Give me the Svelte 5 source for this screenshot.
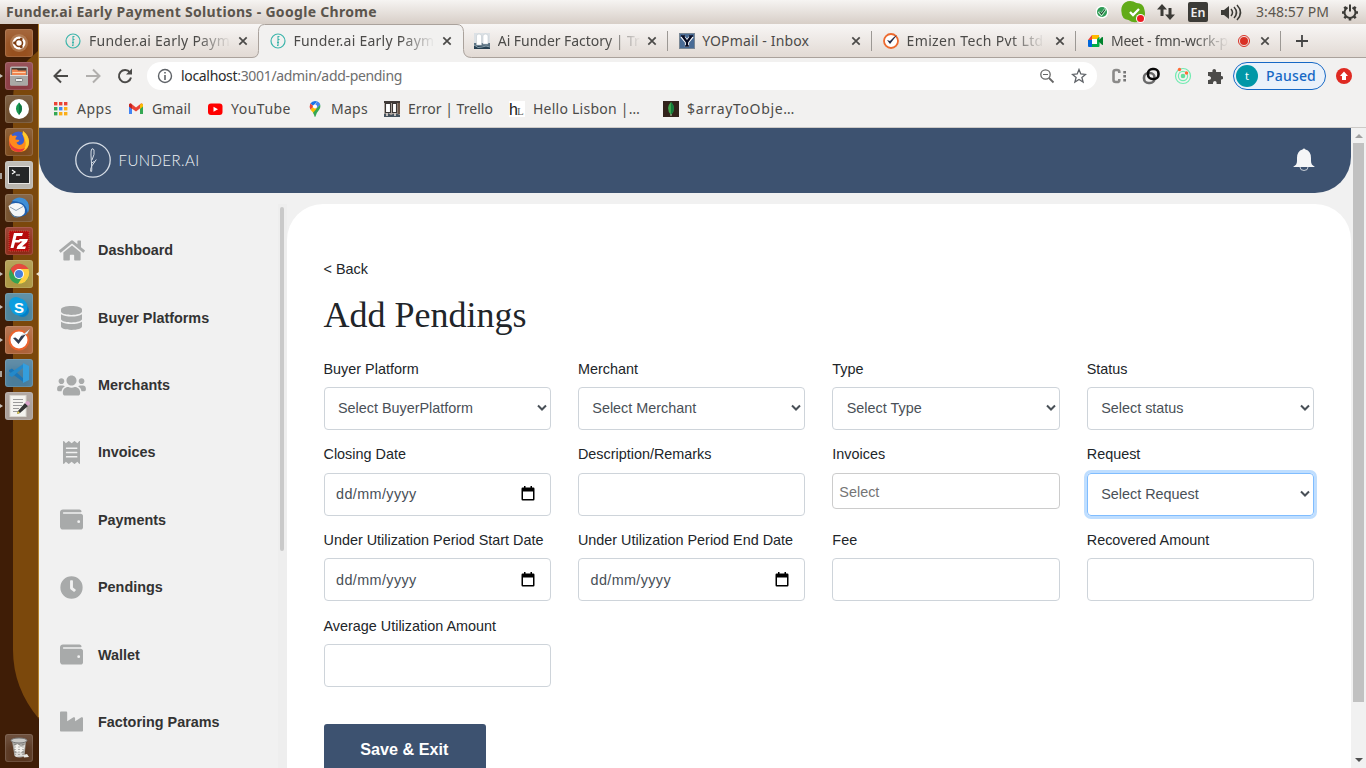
<script>
  const tabs = [
    { icon: 'funder', text: 'Funder.ai Early Paym', w: 141, clip: 142, fade: true },
    { icon: 'funder', text: 'Funder.ai Early Paym', w: 141, clip: 142, fade: true },
    { icon: 'factory', text: 'Ai Funder Factory | Tr', w: 142, clip: 143, fade: true, sep: true },
    { icon: 'yop', text: 'YOPmail - Inbox', w: 107, clip: 142, sep: true },
    { icon: 'emizen', text: 'Emizen Tech Pvt Ltd', w: 137, clip: 138, fade: true, sep: true },
    { icon: 'meet', text: 'Meet - fmn-wcrk-p', w: 117, clip: 118, fade: true, sep: true, rec: true }
  ];

  const bookmarks = [
    { icon: 'apps', text: 'Apps', w: 35, box: 75 },
    { icon: 'gmail', text: 'Gmail', w: 39, box: 79 },
    { icon: 'youtube', text: 'YouTube', w: 60, box: 100 },
    { icon: 'maps', text: 'Maps', w: 37, box: 77 },
    { icon: 'trello', text: 'Error | Trello', w: 85, box: 125 },
    { icon: 'lisbon', text: 'Hello Lisbon |…', w: 107, box: 154 },
    { icon: 'leaf', text: '$arrayToObje…', w: 108, box: 140 }
  ];

  const menu = [
    ['home', 'Dashboard'],
    ['database', 'Buyer Platforms'],
    ['users', 'Merchants'],
    ['receipt', 'Invoices'],
    ['wallet', 'Payments'],
    ['clock', 'Pendings'],
    ['wallet', 'Wallet'],
    ['industry', 'Factoring Params']
  ];

  const fields = [
    { label: 'Buyer Platform', kind: 'select', text: 'Select BuyerPlatform' },
    { label: 'Merchant', kind: 'select', text: 'Select Merchant' },
    { label: 'Type', kind: 'select', text: 'Select Type' },
    { label: 'Status', kind: 'select', text: 'Select status' },
    { label: 'Closing Date', kind: 'date' },
    { label: 'Description/Remarks', kind: 'text' },
    { label: 'Invoices', kind: 'multi', text: 'Select' },
    { label: 'Request', kind: 'select', text: 'Select Request', focus: true },
    { label: 'Under Utilization Period Start Date', kind: 'date' },
    { label: 'Under Utilization Period End Date', kind: 'date' },
    { label: 'Fee', kind: 'text' },
    { label: 'Recovered Amount', kind: 'text' },
    { label: 'Average Utilization Amount', kind: 'text' }
  ];

  const dock = [
    { app: 'ubuntu', bg: '#97501f' },
    { app: 'files', bg: '#8a3a42', mark: 'run' },
    { app: 'mongo', bg: '#6b4a2a' },
    { app: 'firefox', bg: '#7d4a1c' },
    { app: 'terminal', bg: '#b9b5ae', mark: 'block' },
    { app: 'thunderbird', bg: '#75502c' },
    { app: 'filezilla', bg: '#8e2a18' },
    { app: 'chrome', bg: '#ac9642', mark: 'run', active: true },
    { app: 'skype', bg: '#4b8299', mark: 'run' },
    { app: 'todo', bg: '#ad6238', mark: 'run' },
    { app: 'code', bg: '#4a7d9b', mark: 'block' },
    { app: 'editor', bg: '#a79d97', mark: 'run' }
  ];

  // Spreads the letters so that a label occupies its intended width.
  function fit(node, width) {
    const natural = node.getBoundingClientRect().width;
    node.style.letterSpacing = (width - natural) / node.textContent.length + 'px';
  }
</script>

{#snippet favicon(name)}
  <svg class="fav" width="16" height="16" viewBox="0 0 16 16">
    {#if name === 'funder'}
      <circle cx="8" cy="8" r="7" fill="none" stroke="#3db5ab" stroke-width="1.200" />
      <path d="M8 3v10M8 3.500h1.500M8 6.500h1.500M7 9.500h2M7 12.500h1.500" stroke="#3db5ab" fill="none" stroke-width="1.100" />
    {:else if name === 'factory'}
      <rect width="16" height="16" fill="#dce1e5" /><path d="M0 10h16v6H0z" fill="#5b7282" /><path d="M0 13h16v3H0z" fill="#263f51" />
      <path d="M2.500 3q0-2 2.500-2t2.500 2v9h-5zM9 3q0-2 2.500-2T14 3v8H9z" fill="#fff" stroke="#b9c2c9" stroke-width=".5" /><path d="M0 12q4 4 8 2t8 0" stroke="#8aa0ad" fill="none" />
    {:else if name === 'yop'}
      <rect x=".5" y=".5" width="15" height="15" fill="#496b95" stroke="#7a8794" />
      <path d="M3 3l5 6M13 3L8 9v5" stroke="#fff" stroke-width="4.200" fill="none" /><path d="M3.500 3L8 9l4.500-6M8 9v4" stroke="#050b24" stroke-width="2.300" fill="none" /><path d="M2 3h4M10 3h4M6 13h4" stroke="#050b24" stroke-width="1.300" />
    {:else if name === 'emizen'}
      <circle cx="8" cy="8" r="7" fill="#fff" stroke="#ed6a2f" stroke-width="1.800" /><path d="M4 7l3 4 7-9-3 2-4 4z" fill="#222b48" />
    {:else if name === 'meet'}
      <path d="M1 7l4-5v5z" fill="#ea4335" /><path d="M5 2h7v5H5z" fill="#ffba00" /><path d="M1 7h4v7H2q-1 0-1-1z" fill="#0066da" /><path d="M5 10h4v4H5z" fill="#00ac47" /><path d="M9 7l3-3h.5v9q0 1-1 1H5v-3h4z" fill="#00ac47" /><path d="M11 8l4-4q1-.4 1 .5v7q0 1-1 .3z" fill="#00832d" /><path d="M5 6h5v5H5z" fill="#fff" />
    {:else if name === 'apps'}
      {#each ['#ea4335', '#ea4335', '#ea4335', '#34a853', '#4285f4', '#fbae17', '#34a853', '#fbae17', '#fbae17'] as c, i}
        <rect x={1 + (i % 3) * 5} y={1 + Math.floor(i / 3) * 5} width="3.400" height="3.400" fill={c} />
      {/each}
    {:else if name === 'gmail'}
      <path d="M1 4v9h3V7z" fill="#4285f4" /><path d="M15 4v9h-3V7z" fill="#34a853" /><path d="M1 4q0-2 2-1.500L8 6.500l5-4q2-.5 2 1.500v1L8 10.500 1 5.500z" fill="#ea4335" /><path d="M12 4l1-1.500q2-.5 2 1.500v1.500L12 8z" fill="#fbbc04" /><path d="M1 4q0-2 2-1.500L4 4v4L1 5.500z" fill="#c5221f" />
    {:else if name === 'youtube'}
      <rect x="1" y="2.500" width="14.500" height="11.500" rx="3" fill="#f00" /><path d="M6.500 5.800v5l4.500-2.500z" fill="#fff" />
    {:else if name === 'maps'}
      <path d="M3.300 2.500Q5 0 8 0q1.200 0 2.200.5L6.300 5z" fill="#1a73e8" /><path d="M10.200.5Q12.500 1.300 13.200 3.700L8.500 9 6.700 6.800z" fill="#4285f4" /><path d="M3.300 2.500L6.800 5.400 3.500 8.800Q2 5.500 3.300 2.500z" fill="#ea4335" /><path d="M3.500 8.800L11 1q2.500 3 1.200 6L6.800 12.500Q5 10.500 3.500 8.800z" fill="#fbbc04" /><path d="M10.200.5Q12.500 1.300 13.200 3.700L9.500 8 8.500 4z" fill="#4285f4" /><path d="M13.200 3.700q.6 2.600-.9 4.900Q9 12.500 8.500 15.500q-.5.800-1 0-.2-1.500-1.500-3.800z" fill="#34a853" /><circle cx="8" cy="5.500" r="2.100" fill="#fff" />
    {:else if name === 'trello'}
      <rect width="16" height="16" fill="#b4aaa3" /><path d="M0 0h16v2H0z" fill="#3f3936" /><path d="M1.500 2.500h5v9h-5zM8.500 2.500h4v9h-4z" fill="#fff" stroke="#3b3735" stroke-width="1.100" /><path d="M13.500 2H16v11h-2.500z" fill="#6b5648" /><path d="M0 13l4-1 3 2 4-2 5 2v2H0z" fill="#44525d" /><path d="M3 12v3M11 12v3" stroke="#efe4dc" stroke-width="1.500" />
    {:else if name === 'lisbon'}
      <rect width="16" height="16" fill="#fff" /><text x="0" y="13.500" class="lis-h">h</text><text x="8" y="14" class="lis-l">L</text>
    {:else if name === 'leaf'}
      <rect width="16" height="16" fill="#32231b" /><path d="M8 1q6 6 0 13Q2 7 8 1z" fill="#3fa64b" /><path d="M8 1q6 6 0 13z" fill="#127b3c" /><path d="M8 13v2" stroke="#b8c4a5" />
    {/if}
  </svg>
{/snippet}

{#snippet appIcon(name)}
  <svg width="28" height="28" viewBox="0 0 28 28">
    {#if name === 'ubuntu'}
      <circle cx="14" cy="14" r="9" fill="#c49873" opacity=".5" /><circle cx="14" cy="14" r="6.500" fill="#fff" /><circle cx="14" cy="14" r="3.500" fill="none" stroke="#7d3d12" stroke-width="1.600" /><circle cx="9.500" cy="14" r="1.400" fill="#7d3d12" /><circle cx="16.300" cy="10" r="1.400" fill="#7d3d12" /><circle cx="16.300" cy="18" r="1.400" fill="#7d3d12" />
    {:else if name === 'files'}
      <rect x="5" y="4.500" width="18" height="19" rx="1.500" fill="#b5b3b0" /><path d="M6.500 6h15v7h-15z" fill="#4a3c34" /><path d="M7 7.500h5l1 1h8V13H7z" fill="#ef8550" /><path d="M7.500 10.500h13" stroke="#fbd3ad" /><path d="M5 13h18v9.500q0 1-1 1H6q-1 0-1-1z" fill="#a9a8a5" /><path d="M5 13.500h18" stroke="#dedddb" /><rect x="10.500" y="16.500" width="7" height="3" rx="1" fill="#eee" stroke="#777" />
    {:else if name === 'mongo'}
      <circle cx="14" cy="14" r="10" fill="#fff" /><path d="M14 7.500q6 6 0 12.500-6-6.500 0-12.500z" fill="#199851" /><path d="M14 7.500q6 6 0 12.500z" fill="#117541" />
    {:else if name === 'firefox'}
      <circle cx="13.500" cy="12.500" r="9" fill="#3a5fd0" /><path d="M4.500 8l1.500-2 1.500 2q2.500-1 4.500 0-2 2-1.500 3.500l4 .5q-.5 2-3 2.500 1 3.500 5 2 3-1.500 2.500-5.500l-1.500-5q1-2 .5-3 5.500 4 6 10Q24 24 14 24 4 24 4 14q0-3 .5-6z" fill="#ff8a1c" /><path d="M18 3q6 5 6 11 0 6-6 9 4-5 2-11-1-4-2.500-5.500z" fill="#ffc92b" /><path d="M4.200 12q1.800 8 8.800 9 5 .5 7-1-2 4-7 4-9-1-8.800-12z" fill="#e63a3a" />
    {:else if name === 'terminal'}
      <rect x="3.500" y="5.500" width="21" height="17" fill="#252627" stroke="#e7e5e2" /><path d="M7 9l3 2-3 2M11 14h4" stroke="#fff" stroke-width="1.200" fill="none" />
    {:else if name === 'thunderbird'}
      <circle cx="14.500" cy="13.500" r="9.500" fill="#1f5fae" /><path d="M7 7Q13 1 20 5q6 5 3 14-2-8-6-10-5-2-10-2z" fill="#3f8fd6" /><path d="M3.500 12q3-3 7-3 7 0 9 5 2 5-3 8-7 2-10-3-2.500-3-3-7z" fill="#f4f6f7" /><path d="M5 13l6 3.500 7-4" stroke="#8fa3b5" fill="none" /><path d="M4 16q3 7 10 7.500-7 1-10-7.500z" fill="#3f8fd6" />
    {:else if name === 'filezilla'}
      <rect x="4" y="4" width="20" height="20" fill="#b60c0c" stroke="#ce4d3d" stroke-dasharray="1 1" /><path d="M9 6h9l-1 3h-5.500l-1 4h5l-1 2.500H10L8.500 21H5.500z" fill="#fff" /><path d="M14.500 12h8.500l-1 3-5 4.500h4l-1 2.500h-8.500l1-3 5-4.500h-4z" fill="#fff" />
    {:else if name === 'chrome'}
      <circle cx="14" cy="14" r="10" fill="#33a352" /><path d="M5.500 9Q10 3 16 4q5 1 7.500 5H14q-5 1-5 6z" fill="#e64a3e" /><path d="M14 9h9.500Q26 16 20 22q-3 2-7 2l5-8q2-4-4-7z" fill="#ffcf3e" /><circle cx="14" cy="14" r="5" fill="#fff" /><circle cx="14" cy="14" r="4" fill="#467fdb" />
    {:else if name === 'skype'}
      <circle cx="11" cy="11" r="7" fill="#0c9ddd" /><circle cx="17.500" cy="17.500" r="6.500" fill="#047fc6" /><circle cx="14" cy="14" r="8.500" fill="#0b9de0" /><text x="14" y="19.500" text-anchor="middle" class="skype-s">S</text>
    {:else if name === 'todo'}
      <circle cx="14" cy="14" r="9.500" fill="#fff" stroke="#ec632d" stroke-width="2" /><path d="M8 12l5.500 6L25 3l-9 7-2.500 4-3-2.500z" fill="#333d51" /><path d="M16 10l9-7-3 5z" fill="#eee" />
    {:else if name === 'code'}
      <path d="M4 11l3-1.500L19 20v3.500L4 12.500z" fill="#1b76b8" /><path d="M4 16.500L7 18 19 8V4.500L4 15z" fill="#2489ca" /><path d="M18 4l6 3v14l-6 3z" fill="#349edd" />
    {:else if name === 'editor'}
      <rect x="5" y="3.500" width="16" height="21" fill="#f4f3ef" stroke="#dad7d0" /><path d="M8 7.500h10M8 10.500h10M8 13.500h9M8 16.500h6M8 19.500h5" stroke="#999" /><path d="M13 19l7-8 3 3-8 7-3 1z" fill="#353535" /><path d="M20 11l2-2q3 0 3 3l-2 2z" fill="#d9a0c9" /><path d="M12 22l1-3 2 2z" fill="#e6d34d" />
    {:else if name === 'trash'}
      <path d="M7 7h14l-1.500 15q-5 3-10 0z" fill="#aaa9a5" /><ellipse cx="14" cy="6.500" rx="8" ry="2.500" fill="#c9c9c6" stroke="#777" /><path d="M9 12l4-2 3 3 4-2-1 5-4 3-5-2z" fill="#f2f1ed" /><path d="M9 20l4-2 6 2-1 2-7 1z" fill="#dddcd8" /><path d="M18 21l4-1 2 3-5 .5z" fill="#e8e8e4" /><path d="M10 10v11M14 10v12M18 10v11" stroke="#767571" stroke-dasharray="1 1.500" />
    {/if}
  </svg>
{/snippet}

{#snippet menuIcon(name)}
  {#if name === 'home'}
    <svg width="26" height="23" viewBox="0 0 576 512"><path d="M280.400 148.300L96 300.100V464a16 16 0 0 0 16 16l112.100-.3a16 16 0 0 0 15.900-16V368a16 16 0 0 1 16-16h64a16 16 0 0 1 16 16v95.600a16 16 0 0 0 16 16.100L464 480a16 16 0 0 0 16-16V300L295.700 148.300a12.200 12.200 0 0 0-15.300 0zM571.600 251.500L488 182.600V44.100a12 12 0 0 0-12-12h-56a12 12 0 0 0-12 12v72.600L318.500 43a48 48 0 0 0-61 0L4.300 251.500a12 12 0 0 0-1.600 16.900l25.500 31a12 12 0 0 0 16.900 1.600L280.400 107.200a12.200 12.200 0 0 1 15.300 0L530.900 301a12 12 0 0 0 16.900-1.600l25.500-31a12 12 0 0 0-1.700-16.900z" /></svg>
  {:else if name === 'database'}
    <svg width="21" height="24" viewBox="0 0 448 512"><path d="M448 73.100v45.800C448 159.100 347.700 192 224 192S0 159.100 0 118.900V73.100C0 32.900 100.300 0 224 0s224 32.900 224 73.100zM448 176v102.900C448 319.100 347.700 352 224 352S0 319.100 0 278.900V176c48.100 33.100 136.200 48.600 224 48.600S399.900 209.100 448 176zm0 160v102.900C448 479.100 347.700 512 224 512S0 479.100 0 438.900V336c48.100 33.100 136.200 48.600 224 48.600S399.900 369.100 448 336z" /></svg>
  {:else if name === 'users'}
    <svg width="29" height="23" viewBox="0 0 640 512"><path d="M96 224c35.300 0 64-28.700 64-64s-28.700-64-64-64-64 28.700-64 64 28.700 64 64 64zm448 0c35.300 0 64-28.700 64-64s-28.700-64-64-64-64 28.700-64 64 28.700 64 64 64zm32 32h-64c-17.600 0-33.500 7.100-45.100 18.600 40.300 22.100 68.900 62 75.100 109.400h66c17.700 0 32-14.300 32-32v-32c0-35.300-28.700-64-64-64zm-256 0c61.900 0 112-50.100 112-112S381.900 32 320 32 208 82.100 208 144s50.100 112 112 112zm76.800 32h-8.300c-20.800 10-43.900 16-68.500 16s-47.600-6-68.500-16h-8.300C179.600 288 128 339.600 128 403.200V432c0 26.500 21.500 48 48 48h288c26.500 0 48-21.500 48-48v-28.800c0-63.600-51.600-115.200-115.200-115.200zm-223.700-13.400C161.500 263.100 145.600 256 128 256H64c-35.300 0-64 28.700-64 64v32c0 17.700 14.300 32 32 32h65.900c6.300-47.400 34.900-87.300 75.200-109.400z" /></svg>
  {:else if name === 'receipt'}
    <svg width="17.250" height="23" viewBox="0 0 384 512"><path d="M358.400 3.200L320 48 265.600 3.200a15.900 15.900 0 0 0-19.200 0L192 48 137.600 3.200a15.900 15.900 0 0 0-19.200 0L64 48 25.600 3.200C15-4.700 0 2.800 0 16v480c0 13.200 15 20.700 25.600 12.800L64 464l54.400 44.800a15.900 15.900 0 0 0 19.200 0L192 464l54.400 44.800a15.900 15.900 0 0 0 19.200 0L320 464l38.400 44.800c10.500 7.900 25.600.4 25.600-12.800V16c0-13.200-15-20.700-25.600-12.800zM320 360a8 8 0 0 1-8 8H72a8 8 0 0 1-8-8v-16a8 8 0 0 1 8-8h240a8 8 0 0 1 8 8zm0-96a8 8 0 0 1-8 8H72a8 8 0 0 1-8-8v-16a8 8 0 0 1 8-8h240a8 8 0 0 1 8 8zm0-96a8 8 0 0 1-8 8H72a8 8 0 0 1-8-8v-16a8 8 0 0 1 8-8h240a8 8 0 0 1 8 8z" /></svg>
  {:else if name === 'wallet'}
    <svg width="23" height="23" viewBox="0 0 512 512"><path d="M461.200 128H80a16 16 0 0 1 0-32h384c8.800 0 16-7.200 16-16 0-26.500-21.500-48-48-48H64C28.700 32 0 60.700 0 96v320c0 35.300 28.700 64 64 64h397.200c28 0 50.800-21.500 50.800-48V176c0-26.500-22.800-48-50.800-48zM416 336a32 32 0 1 1 0-64 32 32 0 0 1 0 64z" /></svg>
  {:else if name === 'clock'}
    <svg width="23" height="23" viewBox="0 0 512 512"><path d="M256 8a248 248 0 1 0 0 496A248 248 0 0 0 256 8zm92.500 313l-20 25a16 16 0 0 1-22.500 2.500l-67-49.700a40 40 0 0 1-15-31.200V112a16 16 0 0 1 16-16h32a16 16 0 0 1 16 16v144l58 42.500a16 16 0 0 1 2.500 22.500z" /></svg>
  {:else}
    <svg width="23" height="23" viewBox="0 0 512 512"><path d="M475.100 163.800L336 252.300v-68.300c0-18.900-20.900-30.400-36.900-20.200L160 252.300V56c0-13.300-10.700-24-24-24H24C10.700 32 0 42.700 0 56v400c0 13.300 10.700 24 24 24h464c13.300 0 24-10.700 24-24V184c0-18.900-20.900-30.400-36.900-20.200z" /></svg>
  {/if}
{/snippet}

<div class="screen">
  <div class="panel">
    <strong><span use:fit={371}>Funder.ai Early Payment Solutions - Google Chrome</span></strong>
    <div class="tray">
      <svg width="270" height="24" viewBox="0 0 270 24">
        <circle cx="6" cy="12" r="6.500" fill="#fff" /><circle cx="6" cy="12" r="5" fill="#2e9b55" /><path d="M2.800 11.500l2.700 3L9.500 9" fill="none" stroke="#c9f0d5" stroke-width="2.600" /><path d="M3.500 11.500l2 2.500L9 9.500" fill="none" stroke="#154c2b" stroke-width="1.200" />
        <path d="M29 2.500q5.500-3 11.500.5 7 0 8 7 2 8-4 11-7 3-12-1-7-1-7-8-1-6 3.500-9.500z" fill="#61ab18" /><path d="M34 12l3 3 6-6" fill="none" stroke="#fff" stroke-width="2.300" /><circle cx="44.500" cy="18.500" r="4.500" fill="#fff" /><circle cx="44.500" cy="18.500" r="3.500" fill="#ed1c24" />
        <path d="M64.500 16V9.500h-3.500L66 4l5 5.500h-3.500V16zM72.500 8h3v6.500H79L74 20l-5-5.500h3.500z" fill="#3c3b37" />
        <rect x="92" y="2" width="20" height="20" rx="2" fill="#3c3b37" /><text x="102" y="17" class="en" text-anchor="middle">En</text>
        <path d="M125 10h3l5-4v13l-5-4h-3z" fill="#3c3b37" /><path d="M135 9q3 3.500 0 7M138 7q5 5.500 0 11M141 5q7 7.500 0 15" fill="none" stroke="#3c3b37" stroke-width="1.500" />
        <g fill="none" stroke="#3c3b37" stroke-width="2"><path d="M251.500 7.500a5.500 5.500 0 1 0 5 0M254 4.500v7" /><path d="M246 12.500h2.500M259.500 12.500h2.500M254 18v2.500M248.300 6.800l1.800 1.800M259.700 6.800l-1.800 1.800M248.300 18.200l1.800-1.800M259.700 18.200l-1.800-1.800" stroke-width="2.600" /></g>
      </svg>
      <span class="time"><span use:fit={73}>3:48:57 PM</span></span>
    </div>
  </div>

  <div class="desktop">
    <aside class="dock">
      <svg class="swoosh" width="39" height="744" viewBox="0 0 39 744"><path d="M39 26C29 36 22 38 15 60q-2 5-2 20v546q0 38 26 69z" fill="#7b480c" /><path d="M38.500 0v693" stroke="#b5822f" /></svg>
      {#each dock as d}
        <div class="tile" style:background-color={d.bg}>
          {@render appIcon(d.app)}
          {#if d.mark}<i class={d.mark}></i>{/if}
          {#if d.active}<i class="active"></i>{/if}
        </div>
      {/each}
      <div class="tile trash">{@render appIcon('trash')}</div>
    </aside>

    <section class="browser">
      <div class="tabs">
        <svg class="tabline" width="1327" height="34" viewBox="0 0 1327 34"><path d="M0 33.500H213q6.500 0 6.500-7V7.500q0-7 6-7H418q6 0 6.500 7v18q0 8 8 8H1327V34H0z" fill="#f2f1f0" /><path d="M0 33.500H213q6.500 0 6.500-7V7.500q0-7 6-7H418q6 0 6.500 7v18q0 8 8 8H1327" fill="none" stroke="#aaa29c" /></svg>
        {#each tabs as t}
          <div class="tab">
            {@render favicon(t.icon)}
            <div class="title" class:fade={t.fade} style:width={t.clip + 'px'}><span use:fit={t.w}>{t.text}</span></div>
            {#if t.rec}<svg class="rec" width="14" height="14" viewBox="0 0 14 14"><circle cx="7" cy="7" r="5.500" fill="none" stroke="#d93025" /><circle cx="7" cy="7" r="4" fill="#d93025" /></svg>{/if}
            <svg class="close" width="10" height="10" viewBox="0 0 10 10"><path d="M1.300 1.300l7.400 7.400M8.700 1.300L1.300 8.700" stroke="#4b4a48" stroke-width="1.700" /></svg>
            <i class:sep={t.sep}></i>
          </div>
        {/each}
        <svg class="plus" width="12" height="12" viewBox="0 0 12 12"><path d="M6 0v12M0 6h12" stroke="#444" stroke-width="1.800" /></svg>
      </div>

      <div class="toolbar">
        <div class="nav">
          <svg width="18" height="18" viewBox="0 0 18 18"><path d="M16 9H3M9 2.500L2.500 9 9 15.500" stroke="#4b4a48" /></svg>
          <svg width="18" height="18" viewBox="0 0 18 18"><path d="M2 9h13M9 2.500L15.500 9 9 15.500" stroke="#b1afad" /></svg>
          <svg width="18" height="18" viewBox="0 0 18 18"><path d="M14 5.500A6.100 6.100 0 1 0 15 10.500" stroke="#4b4a48" /><path d="M16 1.500v6h-6z" fill="#4b4a48" /></svg>
        </div>
        <div class="omnibox">
          <svg width="16" height="16" viewBox="0 0 16 16"><circle cx="8" cy="8" r="6.500" fill="none" stroke="#5f6368" stroke-width="1.400" /><path d="M8 7v5M8 4v1.500" stroke="#5f6368" stroke-width="1.600" /></svg>
          <div class="url"><span use:fit={221}><b>localhost</b>:3001/admin/add-pending</span></div>
          <svg class="zoom" width="16" height="16" viewBox="0 0 16 16"><circle cx="6.500" cy="6.500" r="4.700" fill="none" stroke="#676767" stroke-width="1.300" /><path d="M10 10l4.500 4.500" stroke="#676767" stroke-width="1.800" /><path d="M4 6.500h5" stroke="#676767" /></svg>
          <svg width="16" height="16" viewBox="0 0 16 16"><path d="M8 1.500l1.800 4.500 4.700.4-3.600 3 1.200 4.600L8 11.500 3.900 14l1.200-4.600-3.600-3L6.200 6z" fill="none" stroke="#5f6368" stroke-width="1.300" /></svg>
        </div>
        <div class="ext">
          <svg width="16" height="16" viewBox="0 0 16 16"><path d="M8.300 5V3.800Q8.300 2 6 2H4.800Q2.500 2 2.500 4v8q0 2 2.300 2H6q2.300 0 2.300-1.800V11" fill="none" stroke="#8b8a89" stroke-width="2.600" /><path d="M12.300 3h2.700v2.500h-2.700zM12.300 7h2.700v2.500h-2.700zM12.300 11h2.700v2.500h-2.700z" fill="#777" /></svg>
          <svg width="18" height="18" viewBox="0 0 18 18"><g fill="none" stroke-width="2.600"><rect x="2" y="6" width="10.500" height="10" rx="4.500" stroke="#6a6a6a" /><rect x="6" y="2" width="10.500" height="10" rx="4.500" stroke="#080808" /></g></svg>
          <svg width="18" height="18" viewBox="0 0 18 18"><g fill="none" stroke="#72ebb1" stroke-width="1.200"><circle cx="9" cy="9" r="7.500" /><circle cx="9" cy="9" r="4.600" /></g><circle cx="9" cy="9" r="2.300" fill="#61df9c" /><circle cx="5.500" cy="2.500" r="1.700" fill="#ff6b36" /><circle cx="12.500" cy="6" r="1.700" fill="#ff6b36" /></svg>
          <svg width="16" height="16" viewBox="0 0 16 16"><path d="M1 4h4.500C4.500 0 10 0 9 4h5v4c3-.5 3 4 0 3.500V16H9.500c1-4-4-4-3.500 0H1v-4c4 .5 4-4.500 0-4z" fill="#4c4b49" /></svg>
        </div>
        <div class="profile"><span class="avatar">t</span><span class="paused"><span use:fit={50}>Paused</span></span></div>
        <svg class="update" width="16" height="16" viewBox="0 0 16 16"><circle cx="8" cy="8" r="8" fill="#df2a22" /><path d="M8 3.500L12 8h-2v4H6V8H4z" fill="#fff" /></svg>
      </div>

      <div class="bookmarks">
        {#each bookmarks as b}
          <div class="bookmark" style:width={b.box + 'px'}>{@render favicon(b.icon)}<span use:fit={b.w}>{b.text}</span></div>
        {/each}
      </div>

      <div class="page">
        <div class="site">
          <header>
            <svg class="logo" width="36" height="36" viewBox="0 0 36 36" fill="none" stroke="#d5dce5"><circle cx="18" cy="18" r="17.200" stroke-width="1.300" /><path d="M17 18Q20 12 19 8q-.8-2-2.200-1-1 1-.8 6l.8 14q.2 3.500-1 2.500-1-1.500 1-5.500l4.500-6.500M17 21q1.500-2 3-1" stroke-width="1" /></svg>
            <span class="brand"><span use:fit={81}>FUNDER.AI</span></span>
            <svg class="bell" width="22" height="24" viewBox="0 0 22 24"><path d="M9.500 2.500Q11 .5 12.500 2.500 18 4 18 11v3q0 4 3.500 5.500v.5H.5v-.5Q4 18 4 14v-3q0-7 5.500-8.500z" fill="#f5f6f7" /><path d="M7 20q0 3.500 4 3.500t4-3.500" fill="none" stroke="#c5ccd5" /></svg>
          </header>
          <div class="body">
            <nav>
              <ul>
                {#each menu as [icon, label]}
                  <li><span class="mi">{@render menuIcon(icon)}</span>{label}</li>
                {/each}
              </ul>
              <div class="track"><div class="thumb"></div></div>
            </nav>
            <main>
              <div class="back">&lt; Back</div>
              <h1>Add Pendings</h1>
              <div class="form">
                {#each fields as f}
                  <div class="field">
                    <div class="label">{f.label}</div>
                    <div class="control {f.kind}" class:focus={f.focus}>
                      {#if f.kind === 'date'}
                        <span><span use:fit={80.500}>dd/mm/yyyy</span></span>
                        <svg width="14" height="16" viewBox="0 0 14 16"><path d="M3 0h1.500v2H3zM9.500 0H11v2H9.500z" /><path d="M1.700 1.500h10.600q1.200 0 1.200 1.200v10.600q0 1.200-1.200 1.200H1.700Q.5 14.500.5 13.300V2.700q0-1.200 1.200-1.200zM2 5.500V13h10V5.500z" fill-rule="evenodd" /></svg>
                      {:else if f.kind !== 'text'}
                        <span>{f.text}</span>
                      {/if}
                      {#if f.kind === 'select'}
                        <svg width="10" height="8" viewBox="0 0 10 8"><path d="M1 1.500l4 4 4-4" fill="none" stroke="#495057" stroke-width="2" /></svg>
                      {/if}
                    </div>
                  </div>
                {/each}
              </div>
              <button>Save &amp; Exit</button>
            </main>
          </div>
        </div>
        <div class="scrollbar"><i class="up"></i><div class="bar"></div><i class="down"></i></div>
      </div>
    </section>
  </div>
</div>

<style>
  :global(body) { margin: 0; overflow: hidden; }
  .screen { width: 1366px; height: 768px; overflow: hidden; display: flex; flex-direction: column; font-family: "Noto Sans", "Open Sans", sans-serif; font-size: 14px; color: #4c4b49; }
  .screen svg { display: block; flex: none; }
  .panel { height: 24px; flex: none; display: flex; align-items: center; justify-content: space-between; padding-left: 6px; background: linear-gradient(#f6f4f2, #d7cec7); white-space: nowrap; }
  .panel strong { font-size: 14px; line-height: 24px; color: #5b554d; }
  .tray { position: relative; width: 270px; height: 24px; }
  .time { position: absolute; left: 160px; top: 0; line-height: 24px; color: #5b554d; }
  .en { font: 600 12.500px "Noto Sans", sans-serif; fill: #eee; }
  .desktop { flex: 1; min-height: 0; display: flex; }

  .dock { position: relative; width: 39px; height: 744px; box-sizing: border-box; background: #3f1d06; padding: 5px 0 6px 5px; display: flex; flex-direction: column; gap: 5px; flex: none; }
  .swoosh { position: absolute; left: 0; top: 0; }
  .tile { position: relative; width: 28px; height: 28px; border-radius: 3px; box-shadow: inset 0 0 0 1px #ffffff20, inset 0 9px 8px #ffffff22; }
  .trash { margin-top: auto; background: #583620; }
  .run, .block, .active { position: absolute; left: -5px; top: 12px; }
  .run { border-left: 3px solid #c8c1ba; border-top: 2.500px solid transparent; border-bottom: 2.500px solid transparent; }
  .block { width: 2px; height: 6px; background: #aaa29a; }
  .active { left: 31px; border-right: 3px solid #f1e5c8; border-top: 2.500px solid transparent; border-bottom: 2.500px solid transparent; }

  .browser { flex: 1; min-width: 0; display: flex; flex-direction: column; background: #f2f1f0; }
  .tabs { position: relative; height: 34px; display: flex; align-items: center; padding-left: 26.400px; background: linear-gradient(#f8f6f5, #e1d9d3); flex: none; }
  .tabline { position: absolute; left: 0; top: 0; }
  .tab { position: relative; width: 204.400px; height: 34px; display: flex; align-items: center; flex: none; }
  .title { margin-left: 7.600px; overflow: hidden; white-space: nowrap; line-height: 32px; }
  .fade { mask-image: linear-gradient(90deg, #000 calc(100% - 34px), transparent); }
  .rec { margin-left: auto; margin-right: 9px; }
  .close { margin-left: auto; margin-right: 10px; }
  .rec + .close { margin-left: 0; }
  .tab > i { width: 1px; height: 20px; margin-right: 11px; }
  .tab > .sep { background: #9c9894; }
  .plus { position: relative; margin-left: 4px; }

  .toolbar { height: 36px; flex: none; display: flex; align-items: center; }
  .nav { display: flex; gap: 14px; padding-left: 13px; width: 95px; }
  .nav svg path { stroke-width: 2; }
  .nav svg path:not([fill]) { fill: none; }
  .omnibox { width: 950px; height: 28px; box-sizing: border-box; border-radius: 14px; background: #fff; display: flex; align-items: center; padding: 0 10px; }
  .url { margin-left: 8px; margin-top: -1px; color: #6e6e6e; white-space: nowrap; }
  .url b { font-weight: 400; color: #2b2b2b; }
  .zoom { margin-left: auto; margin-right: 16px; }
  .ext { width: 136px; box-sizing: border-box; padding: 0 10px 0 14px; display: flex; align-items: center; justify-content: space-between; }
  .profile { width: 93px; height: 28px; box-sizing: border-box; border: 1px solid #1668c5; border-radius: 14px; background: #eaf1fa; display: flex; align-items: center; padding-left: 2px; color: #1668c5; }
  .avatar { width: 22px; height: 22px; border-radius: 50%; background: #0097a7; color: #fff; font-size: 11px; line-height: 21px; text-align: center; }
  .paused { margin-left: 8px; margin-top: -1px; font-weight: 500; }
  .update { margin-left: 10px; }
  .bookmarks { height: 34px; box-sizing: border-box; padding: 0 0 4px 14px; border-bottom: 1px solid #cdcac7; display: flex; align-items: center; flex: none; }
  .bookmark { display: flex; align-items: center; gap: 8px; white-space: nowrap; }
  .lis-h { font: 16px "Liberation Sans", sans-serif; fill: #151515; }
  .lis-l { font: 11px "Liberation Serif", serif; fill: #555; }
  .skype-s { font: bold 15px "Liberation Sans", sans-serif; fill: #fff; }

  .page { flex: 1; min-height: 0; display: flex; background: #f1f1f1; font-family: "Liberation Sans", Arial, sans-serif; font-size: 14.400px; color: #212529; }
  .site { width: 1312px; height: 640px; overflow: hidden; }
  header { height: 65px; box-sizing: border-box; border-radius: 0 0 36px 36px; background: #3d5270; display: flex; align-items: center; padding: 0 36px 1px 35.500px; }
  .brand { margin-left: 8px; font: 15px Lato, sans-serif; font-weight: 300; color: #eff2f6; }
  .bell { margin-left: auto; margin-top: -2px; }
  .body { display: flex; margin-top: 11px; height: 564px; }
  nav { width: 248px; display: flex; justify-content: space-between; }
  ul { list-style: none; margin: 0; padding: 12.550px 0 0 14px; }
  li { height: 67.400px; display: flex; align-items: center; font-weight: 700; color: #333; white-space: nowrap; }
  .mi { width: 37px; display: flex; justify-content: center; margin-right: 8px; fill: #a8aaaa; }
  .track { width: 9px; background: #eeeeee; padding: 3px 0 0 2px; box-sizing: border-box; }
  .thumb { width: 4px; height: 344px; border-radius: 2px; background: #c9c9c9; }
  main { flex: 1; box-sizing: border-box; border-radius: 36px 36px 0 0; background: #fff; padding: 54px 36.800px 0 36.500px; }
  .back { line-height: 22px; }
  h1 { margin: 14px 0 21.600px; font: 400 36px/43px "Liberation Serif", serif; }
  .form { display: grid; grid-template-columns: repeat(4, 1fr); column-gap: 27px; }
  .field { height: 85.700px; }
  .label { line-height: 21.600px; margin-bottom: 6.650px; white-space: nowrap; }
  .control { height: 43px; box-sizing: border-box; border: 1px solid #ced4da; border-radius: 4px; display: flex; align-items: center; justify-content: space-between; color: #495057; }
  .select { padding: 0 3px 0 13.400px; }
  .date { padding: 0 15px 0 11.600px; }
  .date svg { fill: #000; }
  .multi { height: 36px; border-color: #ccc; padding: 3px 0 0 6px; color: #757575; }
  .focus { border-color: #80bdff; box-shadow: 0 0 0 3px #bfdeff; }
  button { margin: 22.600px 0 0; padding: 1px 6px 0 5.500px; width: 162px; height: 51px; border: 0; border-radius: 3px; background: #3d5270; color: #fff; font: 700 16.200px "Liberation Sans", Arial, sans-serif; }

  .scrollbar { width: 15px; display: flex; flex-direction: column; align-items: center; background: #f1f1f1; }
  .up { margin: 6px 0 5px; border: 4px solid transparent; border-top: 0; border-bottom-color: #a0a0a0; }
  .bar { width: 11px; height: 559px; background: #c1c1c1; }
  .down { margin: auto 0 6px; border: 4px solid transparent; border-bottom: 0; border-top-color: #505050; }
</style>
